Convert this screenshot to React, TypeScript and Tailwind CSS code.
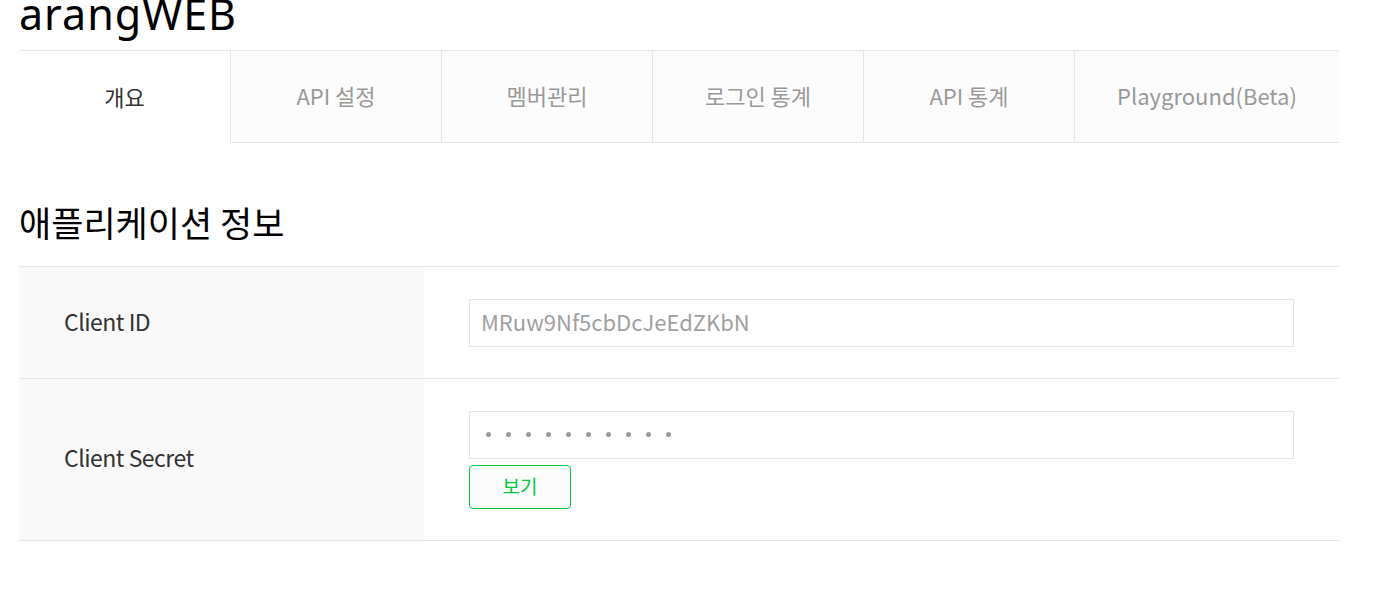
import React from "react";

const tabs = ["개요", "API 설정", "멤버관리", "로그인 통계", "API 통계", "Playground(Beta)"];

export default function App() {
  return (
    <div
      className="w-[1384px] h-[616px] bg-white overflow-hidden"
      style={{ fontFamily: '"Noto Sans CJK KR", "Noto Sans", sans-serif' }}
    >
      <div className="ml-[19px] w-[1320px]">
        <div
          className="h-[50px] text-[43px] leading-[27px] text-black tracking-[1px]"
          style={{ fontFamily: '"Noto Sans", "Noto Sans CJK KR", sans-serif' }}
        >
          arangWEB
        </div>
        <div className="flex border-t border-[#e5e5e5]">
          {tabs.map((t, i) => (
            <div
              key={t}
              className={
                i === 0
                  ? "w-[211px] h-[92px] pb-[2px] flex items-center justify-center bg-white text-[22px] text-[#333]"
                  : i === tabs.length - 1
                  ? "flex-1 h-[92px] pb-[2px] flex items-center justify-center bg-[#fcfcfc] border-l border-b border-[#e5e5e5] text-[22px] text-[#999]"
                  : "w-[211px] h-[92px] pb-[2px] flex items-center justify-center bg-[#fcfcfc] border-l border-b border-[#e5e5e5] text-[22px] text-[#999]"
              }
            >
              {t}
            </div>
          ))}
        </div>
        <h2 className="mt-[59px] mb-[24px] text-[35px] leading-[40px] text-black">애플리케이션 정보</h2>
        <div className="border-t border-[#e5e5e5]">
          <div className="flex border-b border-[#e5e5e5]">
            <div className="w-[405px] bg-[#f9f9f9] pl-[45px] pb-[3px] flex items-center text-[23px] tracking-[-0.5px] text-[#333]">
              Client ID
            </div>
            <div className="flex-1 px-[45px] pt-[32px] pb-[31px]">
              <div className="h-[48px] border border-[#e5e5e5] pl-[11px] pb-[3px] flex items-center text-[22px] text-[#a0a0a0]">
                MRuw9Nf5cbDcJeEdZKbN
              </div>
            </div>
          </div>
          <div className="flex border-b border-[#e5e5e5]">
            <div className="w-[405px] bg-[#f9f9f9] pl-[45px] pb-[5px] flex items-center text-[23px] tracking-[-0.5px] text-[#333]">
              Client Secret
            </div>
            <div className="flex-1 px-[45px] pt-[32px] pb-[31px]">
              <div className="h-[48px] border border-[#e5e5e5] pl-[16px] pb-[1px] flex items-center gap-[15px]">
                {Array.from({ length: 10 }).map((_, i) => (
                  <span key={i} className="w-[5px] h-[5px] rounded-full bg-[#9a9a9a]" />
                ))}
              </div>
              <button className="mt-[6px] w-[102px] h-[44px] pb-[2px] border border-[#00c73c] rounded-[4px] bg-[#fcfcfc] text-[19px] text-[#00c73c] flex items-center justify-center">
                보기
              </button>
            </div>
          </div>
        </div>
      </div>
    </div>
  );
}
